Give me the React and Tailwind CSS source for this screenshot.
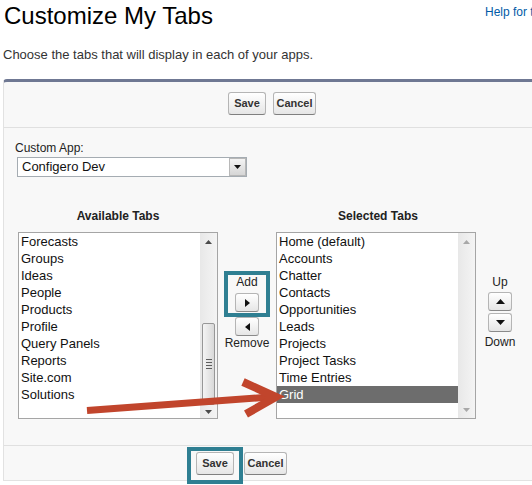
import React from "react";

const btn =
  "h-[23px] rounded-[3px] border border-[#b5b5b5] border-b-[#7f7f7f] bg-linear-to-b from-white to-[#e6e6e6] text-[11px] font-bold text-[#333] flex items-center justify-center leading-none";
const arrowBtn =
  "w-[24px] h-[19px] rounded-[3px] border border-[#b5b5b5] border-b-[#8a8a8a] bg-linear-to-b from-white to-[#e6e6e6] flex items-center justify-center";

function TriRight() {
  return (
    <svg width="5" height="8" viewBox="0 0 5 8">
      <polygon points="0,0 5,4 0,8" fill="#111" />
    </svg>
  );
}
function TriLeft() {
  return (
    <svg width="5" height="8" viewBox="0 0 5 8">
      <polygon points="5,0 0,4 5,8" fill="#111" />
    </svg>
  );
}
function TriUp({ c = "#111", w = 9, h = 5 }) {
  return (
    <svg width={w} height={h} viewBox={`0 0 ${w} ${h}`}>
      <polygon points={`0,${h} ${w / 2},0 ${w},${h}`} fill={c} />
    </svg>
  );
}
function TriDown({ c = "#111", w = 9, h = 5 }) {
  return (
    <svg width={w} height={h} viewBox={`0 0 ${w} ${h}`}>
      <polygon points={`0,0 ${w / 2},${h} ${w},0`} fill={c} />
    </svg>
  );
}

function Scrollbar({ active }) {
  const c = active ? "#4a4a4a" : "#a8a8a8";
  return (
    <div className="w-[17px] h-full bg-linear-to-r from-[#e8e8e8] to-[#f4f4f4] flex flex-col shrink-0">
      <div className="h-[17px] flex items-center justify-center">
        <TriUp c={c} w={7} h={4} />
      </div>
      {active ? (
        <>
          <div className="mt-[73px] mx-[2px] h-[82px] rounded-[2px] border border-[#979797] bg-linear-to-r from-[#f4f4f4] to-[#d9d9d9] flex flex-col items-center justify-center gap-[2px]">
            <div className="w-[6px] h-[1px] bg-[#5e5e5e]" />
            <div className="w-[6px] h-[1px] bg-[#5e5e5e]" />
            <div className="w-[6px] h-[1px] bg-[#5e5e5e]" />
            <div className="w-[6px] h-[1px] bg-[#5e5e5e]" />
          </div>
          <div className="flex-1 flex items-center justify-center">
            <TriDown c={c} w={7} h={4} />
          </div>
        </>
      ) : (
        <>
          <div className="flex-1" />
          <div className="h-[17px] flex items-center justify-center">
            <TriDown c={c} w={7} h={4} />
          </div>
        </>
      )}
    </div>
  );
}

function ListBox({ items, selected, active }) {
  return (
    <div className="w-[200px] h-[187px] border border-[#a5a5a5] bg-white flex shrink-0">
      <div className="flex-1 flex flex-col">
        {items.map((t) => (
          <div
            key={t}
            className={
              "h-[17px] pl-[2px] text-[13px] leading-[17px] whitespace-nowrap " +
              (t === selected ? "bg-[#6d6d6d] text-white" : "text-[#111]")
            }
          >
            {t}
          </div>
        ))}
      </div>
      <Scrollbar active={active} />
    </div>
  );
}

export default function App() {
  const avail = [
    "Forecasts",
    "Groups",
    "Ideas",
    "People",
    "Products",
    "Profile",
    "Query Panels",
    "Reports",
    "Site.com",
    "Solutions",
  ];
  const sel = [
    "Home (default)",
    "Accounts",
    "Chatter",
    "Contacts",
    "Opportunities",
    "Leads",
    "Projects",
    "Project Tasks",
    "Time Entries",
    "Grid",
  ];

  return (
    <div className="relative w-[532px] h-[485px] overflow-hidden bg-white font-['Liberation_Sans',Arial,sans-serif] text-[#222]">
      {/* Header */}
      <div className="flex items-start">
        <div className="w-[485px] shrink-0 pl-[4px] pt-[2px] text-[24px] leading-[27px] text-black whitespace-nowrap">
          Customize My Tabs
        </div>
        <div className="pt-[5px] text-[12px] leading-[14px] text-[#015ba7] whitespace-nowrap">
          Help for this Page
        </div>
      </div>
      <div className="mt-[18px] pl-[3px] text-[13px] leading-[16px] text-[#333] whitespace-nowrap">
        Choose the tabs that will display in each of your apps.
      </div>

      {/* Panel */}
      <div className="ml-[3px] mt-[16px] w-[537px] bg-[#f8f8f8] border-t-[3px] border-t-[#6f7893] border-l border-l-[#e2e2e2] border-b border-b-[#e2e2e2] rounded-tl-[4px]">
        <div className="flex justify-center gap-[7px] pt-[10px] pb-[12px] border-b border-[#e0e0e0]">
          <div className={btn + " w-[38px]"}>Save</div>
          <div className={btn + " w-[43px]"}>Cancel</div>
        </div>

        <div className="pt-[13px] pb-[26px]">
          <div className="pl-[11px] text-[12px] leading-[14px] text-[#222]">Custom App:</div>
          <div className="ml-[13px] mt-[2px] w-[230px] h-[20px] border border-[#a5acb2] bg-white flex items-center">
            <span className="flex-1 pl-[4px] text-[13px] leading-[16px] text-[#111]">Configero Dev</span>
            <div className="w-[17px] h-[18px] border border-[#b8b8b8] bg-linear-to-b from-[#f4f4f4] to-[#d6d6d6] flex items-center justify-center">
              <TriDown c="#111" w={7} h={4} />
            </div>
          </div>

          <div className="pl-[14px] mt-[32px]">
            <div className="flex text-[12px] leading-[14px] font-bold text-[#222]">
              <div className="w-[200px] text-center">Available Tabs</div>
              <div className="w-[58px]" />
              <div className="w-[200px] text-center pl-[4px]">Selected Tabs</div>
            </div>

            <div className="mt-[9px] flex items-start">
              <ListBox items={avail} active />
              <div className="w-[58px] shrink-0 flex flex-col items-center pt-[39px] text-[12px] leading-[14px] text-[#222]">
                <div className="w-[46px] border-4 border-[#2f7f92] flex flex-col items-center pb-[1px]">
                  <div>Add</div>
                  <div className={arrowBtn + " mt-[4px]"}>
                    <TriRight />
                  </div>
                </div>
                <div className={arrowBtn}>
                  <TriLeft />
                </div>
                <div>Remove</div>
              </div>
              <ListBox items={sel} selected="Grid" />
              <div className="w-[48px] shrink-0 flex flex-col items-center pt-[43px] text-[12px] leading-[14px] text-[#222]">
                <div>Up</div>
                <div className={arrowBtn + " mt-[3px]"}>
                  <TriUp />
                </div>
                <div className={arrowBtn + " mt-[2px]"}>
                  <TriDown />
                </div>
                <div className="mt-[3px]">Down</div>
              </div>
            </div>
          </div>
        </div>

        <div className="h-[35px] border-t border-[#e0e0e0] pl-[183px] pt-[1px] flex items-start">
          <div className="shrink-0 border-4 border-[#2f7f92] pt-[1px] px-[5px] pb-[5px]">
            <div className={btn + " w-[38px]"}>Save</div>
          </div>
          <div className={btn + " w-[43px] ml-[1px] mt-[5px] shrink-0"}>Cancel</div>
        </div>
      </div>

      {/* Red annotation arrow */}
      <svg
        className="absolute left-0 top-0 pointer-events-none"
        width="532"
        height="485"
        viewBox="0 0 532 485"
      >
        <path d="M87,410.5 L270,397" stroke="#c1452c" strokeWidth="7" fill="none" />
        <path
          d="M243,382 L276,397 L246,414"
          stroke="#c1452c"
          strokeWidth="8"
          fill="none"
          strokeLinejoin="miter"
        />
      </svg>
    </div>
  );
}
